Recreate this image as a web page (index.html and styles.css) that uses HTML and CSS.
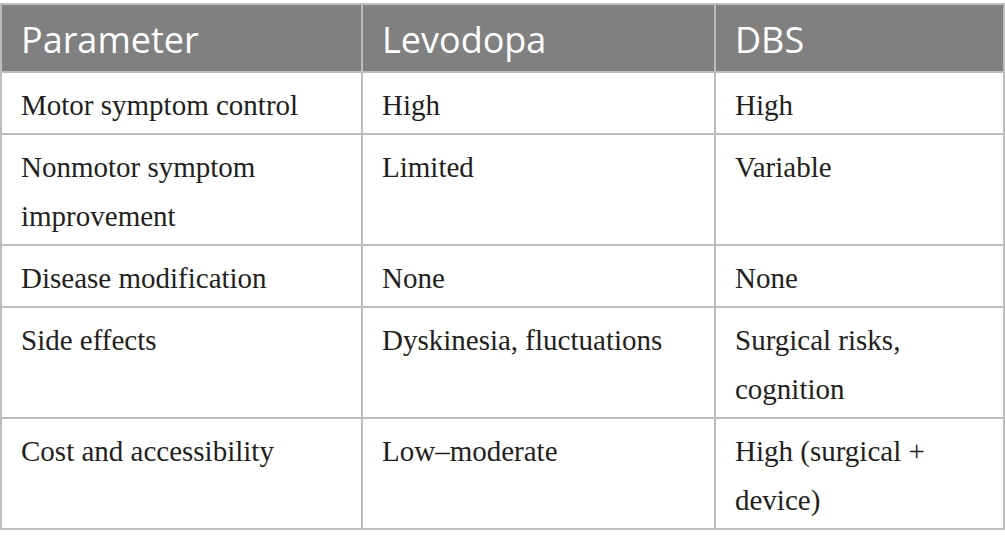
FILE: index.html
```html
<!DOCTYPE html>
<html lang="en">
<head>
    <meta charset="UTF-8">
    <title>Levodopa vs DBS</title>
    <link rel="stylesheet" href="styles.css">
</head>
<body>
    <table class="compare">
        <colgroup>
            <col class="col-param">
            <col class="col-levo">
            <col class="col-dbs">
        </colgroup>
        <thead>
            <tr>
                <th>Parameter</th>
                <th>Levodopa</th>
                <th>DBS</th>
            </tr>
        </thead>
        <tbody>
            <tr>
                <td>Motor symptom control</td>
                <td>High</td>
                <td>High</td>
            </tr>
            <tr>
                <td>Nonmotor symptom improvement</td>
                <td>Limited</td>
                <td>Variable</td>
            </tr>
            <tr>
                <td>Disease modification</td>
                <td>None</td>
                <td>None</td>
            </tr>
            <tr>
                <td>Side effects</td>
                <td>Dyskinesia, fluctuations</td>
                <td>Surgical risks, cognition</td>
            </tr>
            <tr>
                <td>Cost and accessibility</td>
                <td>Low&ndash;moderate</td>
                <td>High (surgical + device)</td>
            </tr>
        </tbody>
    </table>
</body>
</html>
```

FILE: styles.css
```css
body {
    margin: 0;
    padding-top: 3px;
    background: #fff;
}
.compare {
    width: 1005px;
    border-collapse: collapse;
    table-layout: fixed;
    font-family: "Liberation Serif", "Times New Roman", serif;
    color: #231f20;
}
.col-param {
    width: 361px;
}
.col-levo {
    width: 353px;
}
.compare th,
.compare td {
    border: 2px solid #bdbdbd;
    text-align: left;
    vertical-align: top;
}
.compare th {
    background: #7f807f;
    color: #fff;
    font-family: "Open Sans", "Liberation Sans", sans-serif;
    font-weight: 400;
    font-size: 36px;
    line-height: 44px;
    padding: 13px 19px 9px;
}
.compare td {
    font-size: 29px;
    line-height: 49px;
    padding: 8px 19px 3px;
}
```
